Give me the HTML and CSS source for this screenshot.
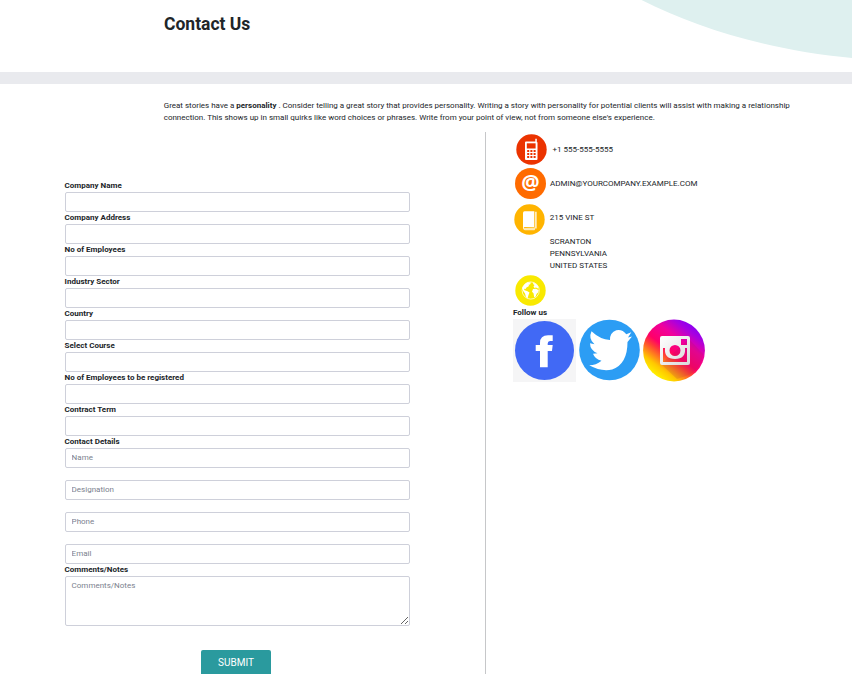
FILE: index.html
```html
<!DOCTYPE html>
<html lang="en">
<head>
<meta charset="utf-8">
<title>Contact Us</title>
<link rel="stylesheet" href="styles.css">
</head>
<body>
<header class="hero">
  <svg class="hero-shape" viewBox="0 0 212 60" aria-hidden="true"><path d="M1.500 0C58 29 134 51 212 58V0Z" fill="#def0ef"/></svg>
  <h1>Contact Us</h1>
</header>
<div class="band"></div>
<p class="intro">Great stories have a <b>personality</b> . Consider telling a great story that provides personality. Writing a story with personality for potential clients will assist with making a relationship<br>connection. This shows up in small quirks like word choices or phrases. Write from your point of view, not from someone else's experience.</p>
<main class="columns">
  <form class="form">
    <label for="f1">Company Name</label><input id="f1">
    <label for="f2">Company Address</label><input id="f2">
    <label for="f3">No of Employees</label><input id="f3">
    <label for="f4">Industry Sector</label><input id="f4">
    <label for="f5">Country</label><input id="f5">
    <label for="f6">Select Course</label><input id="f6">
    <label for="f7">No of Employees to be registered</label><input id="f7">
    <label for="f8">Contract Term</label><input id="f8">
    <label for="f9">Contact Details</label>
    <div class="group">
      <input id="f9" placeholder="Name">
      <input placeholder="Designation">
      <input placeholder="Phone">
      <input placeholder="Email">
    </div>
    <label for="f10">Comments/Notes</label>
    <textarea id="f10" placeholder="Comments/Notes"></textarea>
    <button type="button">SUBMIT</button>
  </form>
  <section class="info">
    <div class="row phone">
      <svg class="badge" viewBox="0 0 31 31"><circle cx="15.500" cy="15.500" r="15.200" fill="#eb3300"/><path d="M19.300 4.800h1.500v3l.7.700v16.500q0 1-1 1h-10.500q-1 0-1-1V8.500q0-1 1-1h9.300Z" fill="#fff"/><path d="M10.800 9.300h8.800v5.200h-8.800z" fill="#eb3300"/><path d="M11.200 17h8.400M11.200 20h8.400M11.200 23h8.400" stroke="#eb3300" stroke-width="1.800" stroke-dasharray="2 1.200"/></svg>
      <span>+1 555-555-5555</span>
    </div>
    <div class="row mail">
      <span class="badge at">@</span>
      <span>ADMIN@YOURCOMPANY.EXAMPLE.COM</span>
    </div>
    <div class="row address">
      <svg class="badge" viewBox="0 0 31 31"><circle cx="15.500" cy="15.500" r="15.200" fill="#ffb400"/><path d="M10.500 7.200H20.300V23H10.500L9 24.500V9q0-1.800 1.500-1.800Z" fill="#fff"/><path d="M21.900 7.800v16.700" stroke="#fff" stroke-width="1.300"/><path d="M9.300 24q.2 1.800 1.700 1.800h9.500V23.500" fill="#ffe7a8" stroke="#fff" stroke-width=".6"/></svg>
      <address>215 VINE ST<br><br>SCRANTON<br>PENNSYLVANIA<br>UNITED STATES</address>
    </div>
    <div class="row web">
      <svg class="badge" viewBox="0 0 31 31"><circle cx="15.500" cy="15.500" r="15.200" fill="#f9e900"/><circle cx="15.700" cy="15.500" r="8.600" fill="none" stroke="#fff" stroke-width=".7"/><path d="M8 11.500q1.500-3 4.500-4.300l3.500.3-1 2-1.500.3.500 1.200-2.500 1.500-1 1.500-1.500-.3.500 1.500 2.500.8 2.500 1.500-1 2.500-1 3.500-1.500-1.500-1-3.500-1.800-2.500-1-3ZM18.500 7.500q3.500 1 5 4.500l-.5 1.500-2-1-1.500.5-1-1.500 1-1.500-1.500-1ZM18 14l3-.3 2.800 1.500-.8 2.300-1.500 1.500-.8 2.500-1.500.8-.7-4-1.500-1.500Z" fill="#fff"/></svg>
    </div>
    <h2>Follow us</h2>
    <div class="social">
      <svg class="fb" viewBox="0 0 63 63"><path d="M0 0h63v63H0z" fill="#f5f5f6"/><circle cx="31.500" cy="31.500" r="29.500" fill="#4169f5"/><path d="M27 48.300V32h-4.300v-6h4.300v-2q0-7.700 8-7.700h4.700V22H37q-2.300 0-2.300 2.500V26h5l-.7 6h-4.300v16.300Z" fill="#fff"/></svg>
      <svg class="tw" viewBox="0 0 61 62"><circle cx="30.500" cy="31" r="30.300" fill="#2c9df4"/><path d="M53 17.500l-4 1 3.300-5.200-5 2q-4-5.300-10-4-6.500 2.300-6.300 9.700-10-.5-18.500-8.700-3.500 7.500 3 13l-4.500-1q0 7 7.500 10l-4.500.5q2 5.500 8.500 7-5.500 4.500-12.300 4.500 12 6.700 23 4.200Q48.500 45 48.500 23Z" fill="#fff"/></svg>
      <svg class="ig" viewBox="0 0 62 63">
        <defs>
          <linearGradient id="g" x1=".2" y1=".9" x2=".8" y2=".1"><stop offset="0" stop-color="#fff000"/><stop offset=".14" stop-color="#ffc800"/><stop offset=".36" stop-color="#ff3b38"/><stop offset=".46" stop-color="#ff0068"/><stop offset=".7" stop-color="#f0009c"/><stop offset=".9" stop-color="#a800e0"/><stop offset="1" stop-color="#8e00f0"/></linearGradient>
          <linearGradient id="c" x1="0" y1="0" x2="1" y2="1"><stop offset="0" stop-color="#fff"/><stop offset="1" stop-color="#d8d8d8"/></linearGradient>
        </defs>
        <circle cx="31" cy="31.500" r="30.900" fill="url(#g)"/><path d="M46 20 60 35Q58 50 46 56L34 60 18 45Z" fill="#8b2448" opacity=".15"/>
        <path fill-rule="evenodd" fill="url(#c)" d="M19 17h26q2 0 2 2v25q0 2-2 2H19q-2 0-2-2V19q0-2 2-2ZM38 20v6h6v-6ZM20 29v14h24V29h-2q1 11-10 11T22 29ZM32 26a5.500 5.500 0 1 0 0 11 5.500 5.500 0 0 0 0-11Z"/>
      </svg>
    </div>
  </section>
</main>
</body>
</html>
```
FILE: styles.css
```css
* { box-sizing: border-box; }
body {
  margin: 0;
  height: 674px;
  overflow: hidden;
  background: #fff;
  color: #212529;
  font: 8px/12px Roboto, "Liberation Sans", sans-serif;
}
h1, h2, p { margin: 0; }
.hero { position: relative; height: 72px; padding: 13px 0 0 164px; }
.hero-shape { position: absolute; top: 0; right: 0; width: 212px; height: 60px; }
h1 { font-size: 17.5px; line-height: 22px; font-weight: 700; }
.band { height: 12px; background: #e9eaee; }
.intro { padding: 16px 0 8px 163.7px; white-space: nowrap; }
.columns { display: flex; height: 542px; }
.form {
  display: flex;
  flex-direction: column;
  width: 486px;
  padding: 48px 76px 0 64.6px;
  border-right: 1px solid #c6c7c9;
}
.info { padding: 2px 0 0 27px; }
label { height: 12px; font-weight: 700; }
input, textarea {
  display: block;
  width: 345px;
  margin: 0;
  padding: 3px 6px;
  border: 1px solid #ced0da;
  border-radius: 2px;
  background: #fff;
  color: #495057;
  font: inherit;
  flex: none;
}
input { height: 20px; padding: 2px 6px 4px; }
::placeholder { color: #7b7f8e; opacity: 1; }
.group { display: grid; gap: 12px; }
textarea { height: 50px; resize: both; }
button {
  align-self: center;
  flex: none;
  width: 70px;
  height: 26px;
  margin: 24px 2.600px 0 0;
  padding: 0 0 2px 1px;
  border: 0;
  border-radius: 2px;
  background: #2a9a9e;
  color: #fff;
  font: 10px/15px Roboto, sans-serif;
}
.row { display: flex; align-items: center; }
.badge { display: block; flex: none; width: 31px; height: 31px; }
.phone { height: 31px; padding-left: 3px; gap: 5.500px; }
.mail { height: 31px; margin-top: 3px; padding-left: 2px; gap: 4px; }
.at {
  border-radius: 50%;
  background: #ff6b00;
  color: #fff;
  font: 700 20.5px/29px "Open Sans", sans-serif;
  text-align: center;
}
.address { align-items: flex-start; height: 68px; margin-top: 4px; padding-left: 1px; gap: 4.700px; }
.address .badge { margin-top: 1px; }
address { padding-top: 9px; font-style: normal; }
.web { height: 31px; margin-top: 4px; padding-left: 2px; }
h2 { margin-top: 1px; font-size: 8px; line-height: 12px; font-weight: 700; }
.social { display: flex; }
.social svg { display: block; flex: none; }
.fb { width: 63px; height: 63px; }
.tw { width: 61px; height: 62px; margin-left: 3px; }
.ig { width: 62px; height: 63px; margin-left: 3px; }
```
